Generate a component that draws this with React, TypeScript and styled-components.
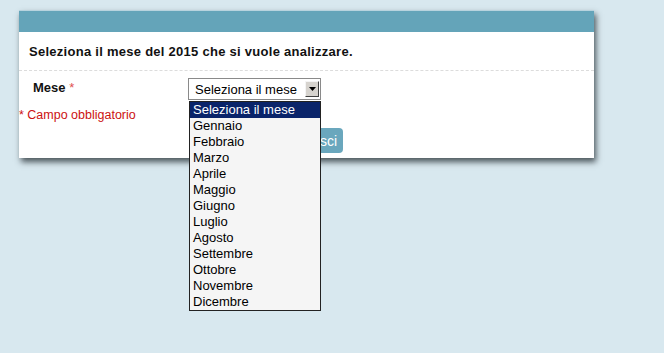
import React from "react";
import styled, { createGlobalStyle } from "styled-components";

const months = [
  "Seleziona il mese",
  "Gennaio",
  "Febbraio",
  "Marzo",
  "Aprile",
  "Maggio",
  "Giugno",
  "Luglio",
  "Agosto",
  "Settembre",
  "Ottobre",
  "Novembre",
  "Dicembre",
];

const App = () => {
  return (
    <Page>
      <GlobalStyle />
      <Card>
        <Header />
        <Title>Seleziona il mese del 2015 che si vuole analizzare.</Title>
        <Form>
          <Row>
            <Label>
              Mese <Star>*</Star>
            </Label>
            <SelectWrap>
              <SelectBox>
                <SelectText>Seleziona il mese</SelectText>
                <Arrow>
                  <svg width="7" height="4" viewBox="0 0 7 4">
                    <path d="M0 0 L7 0 L3.5 4 Z" fill="#000" />
                  </svg>
                </Arrow>
              </SelectBox>
              <List>
                {months.map((m, i) => (
                  <Option key={m} selected={i == 0}>
                    {m}
                  </Option>
                ))}
              </List>
            </SelectWrap>
          </Row>
          <Required>* Campo obbligatorio</Required>
          <Actions>
            <Button>Esci</Button>
          </Actions>
        </Form>
      </Card>
    </Page>
  );
};

const GlobalStyle = createGlobalStyle`
  html, body {
    margin: 0;
    padding: 0;
    background: #d8e8ef;
  }
`;

const Page = styled.div`
  width: 664px;
  height: 353px;
  padding: 10px 0 0 19px;
  box-sizing: border-box;
  font-family: "Liberation Sans", Arial, sans-serif;
`;

const Card = styled.div`
  width: 575px;
  height: 147px;
  background: #ffffff;
  border-top: 1px solid #b8d3de;
  box-shadow: 2px 4px 6px rgba(40, 50, 55, 0.8);
`;

const Header = styled.div`
  height: 21px;
  background: #64a4b9;
`;

const Title = styled.div`
  padding: 12px 10px 11px;
  font-size: 13px;
  font-weight: bold;
  letter-spacing: 0.27px;
  color: #111;
  border-bottom: 1px dashed #dcdcdc;
`;

const Form = styled.div`
  padding-top: 7px;
`;

const Row = styled.div`
  display: flex;
  align-items: flex-start;
`;

const Label = styled.div`
  width: 155px;
  padding: 2px 0 0 14px;
  font-size: 13px;
  font-weight: bold;
  color: #111;
`;

const Star = styled.span`
  color: #e05050;
  font-weight: normal;
`;

const SelectWrap = styled.div`
  position: relative;
`;

const SelectBox = styled.div`
  width: 131px;
  height: 20px;
  border: 1px solid #8a8a8a;
  display: flex;
  align-items: center;
  justify-content: space-between;
  background: #fff;
`;

const SelectText = styled.span`
  font-size: 13px;
  color: #000;
  padding-left: 6px;
`;

const Arrow = styled.div`
  width: 14px;
  height: 16px;
  margin-right: 1px;
  background: #d6d3ce;
  border: 1px solid;
  border-color: #f4f4f4 #404040 #404040 #f4f4f4;
  box-sizing: border-box;
  display: flex;
  align-items: center;
  justify-content: center;
`;

const List = styled.div`
  position: absolute;
  top: 23px;
  left: 1px;
  width: 130px;
  background: #f5f5f5;
  border: 1px solid #222;
  z-index: 10;
`;

const Option = styled.div<{ selected: boolean }>`
  height: 16px;
  line-height: 16px;
  font-size: 13px;
  padding-left: 3px;
  color: ${(p) => (p.selected ? "#fff" : "#000")};
  background: ${(p) => (p.selected ? "#0a246a" : "transparent")};
`;

const Required = styled.div`
  margin-top: 8px;
  font-size: 12.5px;
  color: #cc1111;
`;

const Actions = styled.div`
  display: flex;
  padding-left: 285px;
  margin-top: 6px;
`;

const Button = styled.div`
  width: 39px;
  height: 25px;
  border-radius: 4px;
  background: #6aa7bd;
  color: #fff;
  font-size: 14px;
  display: flex;
  align-items: center;
  justify-content: flex-end;
  padding-right: 6px;
  box-sizing: border-box;
`;

export default App;
